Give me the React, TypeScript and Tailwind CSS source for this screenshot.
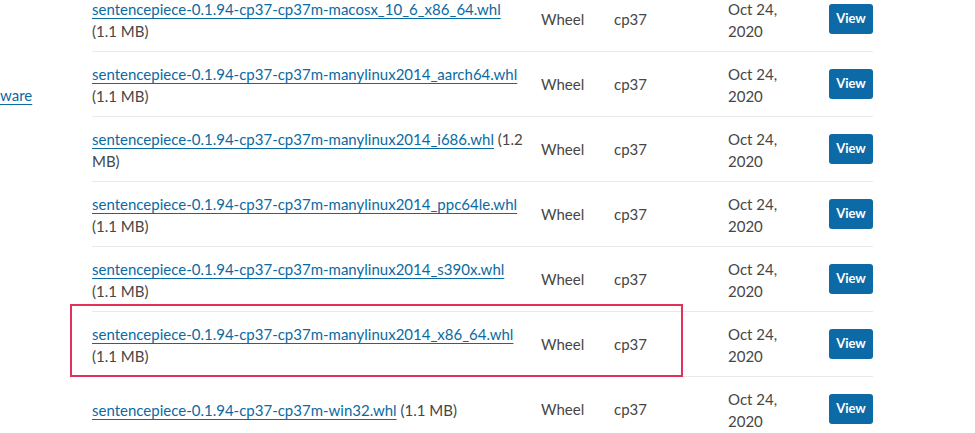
import React from 'react';

type Row = {
  name: string;
  sizeInline?: string;
  sizeNext: string;
};

const rows: Row[] = [
  { name: 'sentencepiece-0.1.94-cp37-cp37m-macosx_10_6_x86_64.whl', sizeNext: '(1.1 MB)' },
  { name: 'sentencepiece-0.1.94-cp37-cp37m-manylinux2014_aarch64.whl', sizeNext: '(1.1 MB)' },
  { name: 'sentencepiece-0.1.94-cp37-cp37m-manylinux2014_i686.whl', sizeInline: '(1.2', sizeNext: 'MB)' },
  { name: 'sentencepiece-0.1.94-cp37-cp37m-manylinux2014_ppc64le.whl', sizeNext: '(1.1 MB)' },
  { name: 'sentencepiece-0.1.94-cp37-cp37m-manylinux2014_s390x.whl', sizeNext: '(1.1 MB)' },
  { name: 'sentencepiece-0.1.94-cp37-cp37m-manylinux2014_x86_64.whl', sizeNext: '(1.1 MB)' },
  { name: 'sentencepiece-0.1.94-cp37-cp37m-win32.whl', sizeInline: '(1.1 MB)', sizeNext: '' },
];

function FileRow({ row }: { row: Row }) {
  return (
    <div className="grid grid-cols-[449px_73px_114px_101px_44px] items-center h-[65px] border-b border-[#e9e9e9]">
      <div className="leading-[22px] pt-[2px]">
        <div>
          <a href="#" className="text-[#0b6aa2] underline decoration-1 underline-offset-[3px]">
            {row.name}
          </a>
          {row.sizeInline && <span> {row.sizeInline}</span>}
        </div>
        {row.sizeNext && <div>{row.sizeNext}</div>}
      </div>
      <div>Wheel</div>
      <div>cp37</div>
      <div className="leading-[22px] pt-[2px]">
        <div>Oct 24,</div>
        <div>2020</div>
      </div>
      <div>
        <button className="w-[44px] h-[30px] rounded-[3px] bg-[#0c6aa6] text-white text-[13px] font-bold">
          View
        </button>
      </div>
    </div>
  );
}

export default function App() {
  return (
    <div className="relative w-[975px] h-[433px] overflow-hidden bg-white text-[#464646] text-[15px] font-['Lato','Liberation_Sans',sans-serif]">
      <div className="flex -mt-[13px]">
        <div className="w-[92px] shrink-0 pt-[97px]">
          <a href="#" className="text-[#0b6aa2] underline decoration-1 underline-offset-[3px]">
            ware
          </a>
        </div>
        <div className="w-[781px] shrink-0">
          {rows.map((r) => (
            <FileRow key={r.name} row={r} />
          ))}
        </div>
      </div>
      {/* highlight drawn over the x86_64 row */}
      <div className="absolute left-[70px] top-[304px] w-[613px] h-[73px] border-2 border-[#e3305b]" />
    </div>
  );
}
